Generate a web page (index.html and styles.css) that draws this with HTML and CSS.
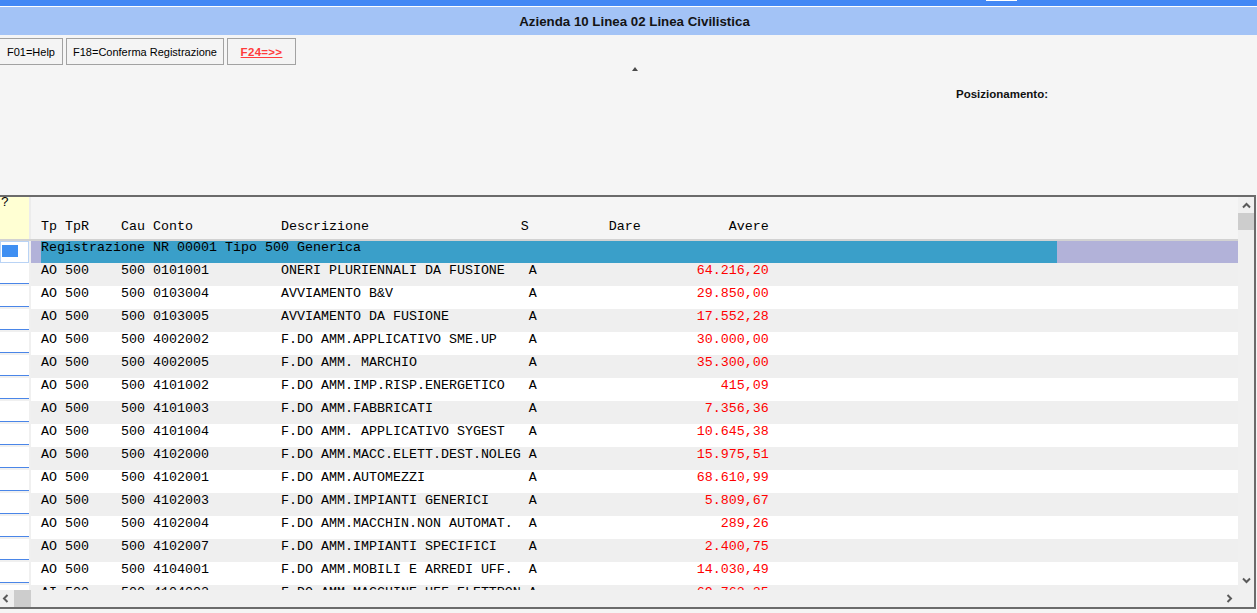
FILE: index.html
```html
<!DOCTYPE html>
<html lang="it">
<head>
<meta charset="utf-8">
<title>Azienda 10 Linea 02 Linea Civilistica</title>
<link rel="stylesheet" href="styles.css">
</head>
<body>
<div class="topbar"><span class="toptab"></span></div>
<div class="titlebar">Azienda 10 Linea 02 Linea Civilistica</div>
<div class="toolbar">
  <button class="btn btn-help">F01=Help</button>
  <button class="btn btn-conf">F18=Conferma Registrazione</button>
  <button class="btn btn-next">F24=&gt;&gt;</button>
</div>
<div class="mid">
  <div class="caret-row"><span class="caret"></span></div>
  <div class="pos-row"><span class="pos">Posizionamento:</span></div>
</div>
<div class="panel">
  <div class="panel-top">
    <div class="grid">
      <div class="hdr">
        <div class="hdr-l">?</div>
        <div class="hdr-m mono">
          <span class="c-tp">Tp</span><span class="c-tpr">TpR</span><span class="c-cau">Cau</span><span class="c-conto">Conto</span><span class="c-desc">Descrizione</span><span class="c-s">S</span><span class="c-dare">Dare</span><span class="c-avere">Avere</span>
        </div>
      </div>
      <div class="hsep"></div>
      <div class="body mono">
        <div class="grow">
          <div class="gcell"><span class="gsq"></span></div>
          <div class="gmain"><div class="gband">Registrazione NR 00001 Tipo 500 Generica</div></div>
        </div>
        <div class="row odd"><div class="lcell"></div><div class="rm"><span class="c-tp">AO</span><span class="c-tpr">500</span><span class="c-cau">500</span><span class="c-conto">0101001</span><span class="c-desc">ONERI PLURIENNALI DA FUSIONE</span><span class="c-s ds">A</span><span class="c-dare"></span><span class="c-avere amt">64.216,20</span></div></div>
        <div class="row"><div class="lcell"></div><div class="rm"><span class="c-tp">AO</span><span class="c-tpr">500</span><span class="c-cau">500</span><span class="c-conto">0103004</span><span class="c-desc">AVVIAMENTO B&amp;V</span><span class="c-s ds">A</span><span class="c-dare"></span><span class="c-avere amt">29.850,00</span></div></div>
        <div class="row odd"><div class="lcell"></div><div class="rm"><span class="c-tp">AO</span><span class="c-tpr">500</span><span class="c-cau">500</span><span class="c-conto">0103005</span><span class="c-desc">AVVIAMENTO DA FUSIONE</span><span class="c-s ds">A</span><span class="c-dare"></span><span class="c-avere amt">17.552,28</span></div></div>
        <div class="row"><div class="lcell"></div><div class="rm"><span class="c-tp">AO</span><span class="c-tpr">500</span><span class="c-cau">500</span><span class="c-conto">4002002</span><span class="c-desc">F.DO AMM.APPLICATIVO SME.UP</span><span class="c-s ds">A</span><span class="c-dare"></span><span class="c-avere amt">30.000,00</span></div></div>
        <div class="row odd"><div class="lcell"></div><div class="rm"><span class="c-tp">AO</span><span class="c-tpr">500</span><span class="c-cau">500</span><span class="c-conto">4002005</span><span class="c-desc">F.DO AMM. MARCHIO</span><span class="c-s ds">A</span><span class="c-dare"></span><span class="c-avere amt">35.300,00</span></div></div>
        <div class="row"><div class="lcell"></div><div class="rm"><span class="c-tp">AO</span><span class="c-tpr">500</span><span class="c-cau">500</span><span class="c-conto">4101002</span><span class="c-desc">F.DO AMM.IMP.RISP.ENERGETICO</span><span class="c-s ds">A</span><span class="c-dare"></span><span class="c-avere amt">415,09</span></div></div>
        <div class="row odd"><div class="lcell"></div><div class="rm"><span class="c-tp">AO</span><span class="c-tpr">500</span><span class="c-cau">500</span><span class="c-conto">4101003</span><span class="c-desc">F.DO AMM.FABBRICATI</span><span class="c-s ds">A</span><span class="c-dare"></span><span class="c-avere amt">7.356,36</span></div></div>
        <div class="row"><div class="lcell"></div><div class="rm"><span class="c-tp">AO</span><span class="c-tpr">500</span><span class="c-cau">500</span><span class="c-conto">4101004</span><span class="c-desc">F.DO AMM. APPLICATIVO SYGEST</span><span class="c-s ds">A</span><span class="c-dare"></span><span class="c-avere amt">10.645,38</span></div></div>
        <div class="row odd"><div class="lcell"></div><div class="rm"><span class="c-tp">AO</span><span class="c-tpr">500</span><span class="c-cau">500</span><span class="c-conto">4102000</span><span class="c-desc">F.DO AMM.MACC.ELETT.DEST.NOLEG</span><span class="c-s ds">A</span><span class="c-dare"></span><span class="c-avere amt">15.975,51</span></div></div>
        <div class="row"><div class="lcell"></div><div class="rm"><span class="c-tp">AO</span><span class="c-tpr">500</span><span class="c-cau">500</span><span class="c-conto">4102001</span><span class="c-desc">F.DO AMM.AUTOMEZZI</span><span class="c-s ds">A</span><span class="c-dare"></span><span class="c-avere amt">68.610,99</span></div></div>
        <div class="row odd"><div class="lcell"></div><div class="rm"><span class="c-tp">AO</span><span class="c-tpr">500</span><span class="c-cau">500</span><span class="c-conto">4102003</span><span class="c-desc">F.DO AMM.IMPIANTI GENERICI</span><span class="c-s ds">A</span><span class="c-dare"></span><span class="c-avere amt">5.809,67</span></div></div>
        <div class="row"><div class="lcell"></div><div class="rm"><span class="c-tp">AO</span><span class="c-tpr">500</span><span class="c-cau">500</span><span class="c-conto">4102004</span><span class="c-desc">F.DO AMM.MACCHIN.NON AUTOMAT.</span><span class="c-s ds">A</span><span class="c-dare"></span><span class="c-avere amt">289,26</span></div></div>
        <div class="row odd"><div class="lcell"></div><div class="rm"><span class="c-tp">AO</span><span class="c-tpr">500</span><span class="c-cau">500</span><span class="c-conto">4102007</span><span class="c-desc">F.DO AMM.IMPIANTI SPECIFICI</span><span class="c-s ds">A</span><span class="c-dare"></span><span class="c-avere amt">2.400,75</span></div></div>
        <div class="row"><div class="lcell"></div><div class="rm"><span class="c-tp">AO</span><span class="c-tpr">500</span><span class="c-cau">500</span><span class="c-conto">4104001</span><span class="c-desc">F.DO AMM.MOBILI E ARREDI UFF.</span><span class="c-s ds">A</span><span class="c-dare"></span><span class="c-avere amt">14.030,49</span></div></div>
        <div class="row odd"><div class="lcell"></div><div class="rm"><span class="c-tp">AI</span><span class="c-tpr">500</span><span class="c-cau">500</span><span class="c-conto">4104002</span><span class="c-desc">F.DO AMM.MACCHINE UFF.ELETTRON</span><span class="c-s ds">A</span><span class="c-dare"></span><span class="c-avere amt">69.763,25</span></div></div>
      </div>
    </div>
    <div class="vscroll">
      <svg class="chev-up" width="9" height="7" viewBox="0 0 9 7"><polyline points="1,5.5 4.5,2 8,5.5" fill="none" stroke="#5a5a5a" stroke-width="2"/></svg>
      <div class="vthumb"></div>
      <div class="vspace"></div>
      <svg class="chev-down" width="9" height="7" viewBox="0 0 9 7"><polyline points="1,1.5 4.5,5 8,1.5" fill="none" stroke="#5a5a5a" stroke-width="2"/></svg>
    </div>
  </div>
  <div class="hscroll">
    <svg class="chev-left" width="7" height="9" viewBox="0 0 7 9"><polyline points="5.5,1 2,4.5 5.5,8" fill="none" stroke="#5a5a5a" stroke-width="2"/></svg>
    <div class="hthumb"></div>
    <div class="hspace"></div>
    <svg class="chev-right" width="7" height="9" viewBox="0 0 7 9"><polyline points="1.5,1 5,4.5 1.5,8" fill="none" stroke="#5a5a5a" stroke-width="2"/></svg>
  </div>
</div>
</body>
</html>
```

FILE: styles.css
```css
* { box-sizing: border-box; }
html, body { margin: 0; padding: 0; }
body {
  background: #f5f5f5;
  width: 1257px;
  height: 613px;
  overflow: hidden;
  font-family: "Liberation Sans", Arial, sans-serif;
  color: #000;
}
.topbar {
  height: 7px;
  background: #4388f5;
  border-bottom: 1px solid #ffffff;
  display: flex;
  padding-left: 986px;
}
.toptab {
  display: block;
  width: 31px;
  height: 1px;
  background: #ffffff;
}
.titlebar {
  height: 28px;
  background: #a3c3f6;
  text-align: center;
  padding-left: 12px;
  font-weight: bold;
  font-size: 13.3px;
  line-height: 29px;
  color: #141414;
}
.toolbar {
  display: flex;
  gap: 3px;
  padding-top: 3px;
  margin-left: -1px;
}
.btn {
  height: 27px;
  border: 1px solid #a2a2a2;
  background: #f4f4f4;
  font-family: "Liberation Sans", Arial, sans-serif;
  font-size: 11px;
  color: #000;
  padding: 0;
  margin: 0;
  text-align: center;
}
.btn-help { width: 64px; }
.btn-conf { width: 158px; }
.btn-next {
  width: 69px;
  color: #ff3b3b;
  font-weight: bold;
  text-decoration: underline;
  font-size: 11.5px;
  letter-spacing: 0.3px;
}
.mid {
  height: 130px;
  display: flex;
  flex-direction: column;
}
.caret-row {
  display: flex;
  justify-content: center;
  padding-left: 12px;
  padding-top: 2px;
  height: 6px;
}
.caret {
  width: 0;
  height: 0;
  border-left: 3px solid transparent;
  border-right: 3px solid transparent;
  border-bottom: 4px solid #4a4a4a;
}
.pos-row {
  padding-left: 956px;
  padding-top: 13px;
}
.pos {
  font-weight: bold;
  font-size: 11.5px;
  color: #111;
}
.panel {
  width: 1256px;
  border-top: 2px solid #6b6b6b;
  border-right: 2px solid #6b6b6b;
  border-bottom: 2px solid #6b6b6b;
  background: #f0f0f0;
}
.panel-top {
  display: flex;
  height: 393px;
}
.grid {
  width: 1238px;
  display: flex;
  flex-direction: column;
}
.mono {
  font-family: "Liberation Mono", "Courier New", monospace;
  font-size: 13.33px;
}
.hdr {
  height: 42px;
  flex: none;
  display: flex;
  gap: 2px;
  background: #ececec;
}
.hdr-l {
  width: 29px;
  background: #ffffd3;
  font-family: "Liberation Mono", monospace;
  font-size: 13.33px;
  line-height: 12px;
  padding-left: 1px;
}
.hdr-m {
  flex: 1;
  background: #f5f5f5;
  display: flex;
  padding-left: 10px;
  padding-top: 22px;
  line-height: 16px;
}
.hsep {
  height: 2px;
  flex: none;
  background: #d2d2d2;
}
.body {
  height: 349px;
  flex: none;
  overflow: hidden;
  background: #f0f0f0;
  display: flex;
  flex-direction: column;
}
.c-tp { width: 3ch; }
.c-tpr { width: 7ch; }
.c-cau { width: 4ch; }
.c-conto { width: 16ch; }
.c-desc { width: 30ch; }
.c-s { width: 11ch; }
.ds { padding-left: 1ch; }
.c-dare { width: 4ch; text-align: right; }
.c-avere { width: 16ch; text-align: right; }
.hdr-m span, .rm span { display: block; flex: none; white-space: pre; }
.amt { color: #ff0000; }

.grow {
  height: 22px;
  flex: none;
  display: flex;
  gap: 2px;
}
.gcell {
  width: 29px;
  background: #ffffff;
  border: 1px solid #b9d3f5;
  padding: 3px 0 0 1px;
}
.gsq {
  display: block;
  width: 16px;
  height: 12px;
  background: #3f8ff2;
}
.gmain {
  flex: 1;
  background: #b2b2d9;
  padding-left: 10px;
  display: flex;
}
.gband {
  width: 1016px;
  background: #3a9fc9;
  line-height: 13px;
  white-space: pre;
}
.row {
  height: 23px;
  flex: none;
  display: flex;
  gap: 2px;
}
.lcell {
  width: 29px;
  height: 21px;
  background: #ffffff;
  border-bottom: 1px solid #4a86e8;
}
.rm {
  flex: 1;
  display: flex;
  background: #ffffff;
  padding-left: 10px;
  line-height: 16px;
}
.row.odd .rm { background: #efefef; }

.vscroll {
  width: 16px;
  background: #f0f0f0;
  display: flex;
  flex-direction: column;
  align-items: center;
}
.chev-up { margin-top: 5px; flex: none; }
.vthumb {
  width: 16px;
  height: 17px;
  background: #cdcdcd;
  margin-top: 4px;
  flex: none;
}
.vspace { flex: 1; }
.chev-down { margin-bottom: 6px; flex: none; }

.hscroll {
  height: 17px;
  display: flex;
  align-items: center;
  background: #f0f0f0;
}
.chev-left { margin-left: 2px; flex: none; }
.hthumb {
  width: 17px;
  height: 17px;
  background: #cdcdcd;
  margin-left: 5px;
  flex: none;
}
.hspace { flex: 1; }
.chev-right { margin-right: 21px; flex: none; }
```
